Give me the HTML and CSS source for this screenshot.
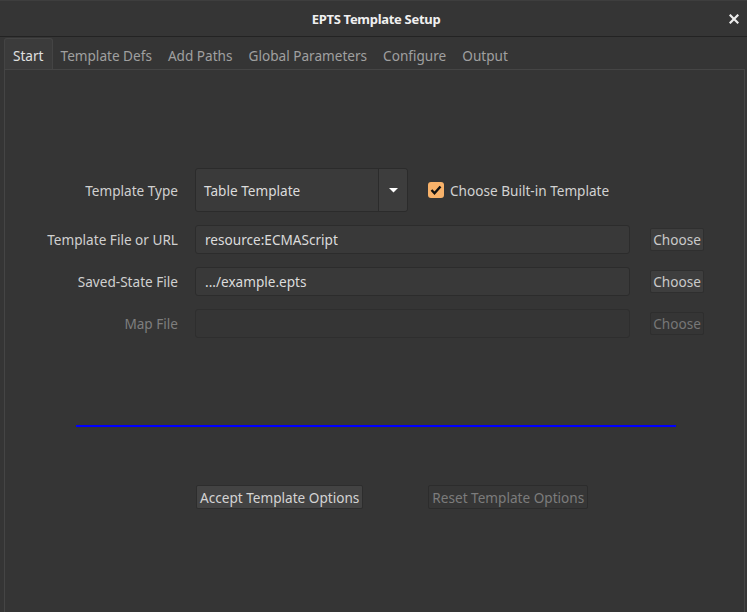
FILE: index.html
```html
<!DOCTYPE html>
<html>
<head>
<meta charset="utf-8">
<link rel="stylesheet" href="styles.css">
</head>
<body>
<div class="window">
  <div class="titlebar">
    <span class="title">EPTS Template Setup</span>
    <span class="close"><svg width="10" height="10" viewBox="0 0 10 10"><path d="M1.5 1.5 L8.5 8.5 M8.5 1.5 L1.5 8.5" stroke="#ececec" stroke-width="2.2" stroke-linecap="square"/></svg></span>
  </div>
  <div class="tabbar">
    <div class="tab active">Start</div>
    <div class="tab">Template Defs</div>
    <div class="tab">Add Paths</div>
    <div class="tab">Global Parameters</div>
    <div class="tab">Configure</div>
    <div class="tab">Output</div>
  </div>
  <div class="pane">
    <div class="form">
      <div class="label">Template Type</div>
      <div class="combo-row">
        <div class="combo">
          <span class="combo-text">Table Template</span>
          <span class="combo-btn"><svg width="9" height="5" viewBox="0 0 9 5"><path d="M0 0 H9 L4.5 4.5 Z" fill="#ffffff"/></svg></span>
        </div>
        <div class="check">
          <span class="box"><svg width="14" height="14" viewBox="0 0 14 14"><path d="M2.5 7 L5.5 10.2 L11.5 3.5" fill="none" stroke="#111" stroke-width="2.4"/></svg></span>
          <span class="check-text">Choose Built-in Template</span>
        </div>
      </div>
      <div class="spacer"></div>

      <div class="label">Template File or URL</div>
      <div class="field">resource:ECMAScript</div>
      <div class="btn-cell"><span class="small-btn">Choose</span></div>

      <div class="label">Saved-State File</div>
      <div class="field">.../example.epts</div>
      <div class="btn-cell"><span class="small-btn">Choose</span></div>

      <div class="label disabled">Map File</div>
      <div class="field disabled-field"></div>
      <div class="btn-cell"><span class="small-btn disabled-btn">Choose</span></div>
    </div>
    <div class="rule"></div>
    <div class="actions">
      <span class="action-btn">Accept Template Options</span>
      <span class="action-btn disabled-action">Reset Template Options</span>
    </div>
  </div>
</div>
</body>
</html>
```

FILE: styles.css
```css
html, body {
  margin: 0;
  padding: 0;
  background: #353535;
}
body {
  width: 747px;
  height: 612px;
  overflow: hidden;
  font-family: "Noto Sans", "Open Sans", sans-serif;
  font-size: 13.6px;
  color: #d8d8d8;
}
.window {
  display: flex;
  flex-direction: column;
  height: 612px;
}
.titlebar {
  height: 37px;
  border-bottom: 1px solid #232323;
  border-top: 1px solid #3e3e3e;
  box-sizing: border-box;
  position: relative;
  display: flex;
  align-items: center;
  justify-content: center;
  background: #353535;
}
.title {
  font-weight: bold;
  font-size: 13px;
  color: #f0f0f0;
  padding-left: 5px;
  letter-spacing: -0.3px;
}
.close {
  position: absolute;
  right: 8px;
  top: 13px;
  width: 10px;
  height: 10px;
  display: flex;
}
.tabbar {
  display: flex;
  padding: 1px 0 0 4px;
  height: 32px;
  box-sizing: border-box;
  align-items: stretch;
}
.tab {
  padding: 4px 8px 0 8px;
  display: flex;
  align-items: center;
  color: #a0a0a0;
}
.tab.active {
  color: #e0e0e0;
  background: #3b3b3b;
  border: 1px solid #444;
  border-bottom: none;
  border-radius: 3px 3px 0 0;
  padding: 3px 8px 0 8px;
}
.pane {
  flex: 1;
  margin-left: 4px;
  margin-right: 2px;
  border: 1px solid #454545;
  border-bottom: none;
  background: #353535;
  padding-top: 98px;
}
.form {
  display: grid;
  grid-template-columns: 155px 455px 54px;
  row-gap: 13px;
  margin-left: 35px;
}
.form > .label { padding-right: 17px; }
.form > .field { margin-right: 20px; }
.label {
  display: flex;
  align-items: center;
  justify-content: flex-end;
  color: #d0d0d0;
  white-space: nowrap;
}
.label.disabled { color: #7e7e7e; }
.combo-row {
  display: flex;
  align-items: center;
  gap: 20px;
  height: 44px;
}
.combo {
  width: 213px;
  height: 44px;
  box-sizing: border-box;
  border: 1px solid #2b2b2b;
  border-radius: 3px;
  background: #3a3a3a;
  display: flex;
}
.combo-text {
  flex: 1;
  display: flex;
  align-items: center;
  padding-left: 8px;
  color: #dcdcdc;
}
.combo-btn {
  width: 28px;
  border-left: 1px solid #2b2b2b;
  background: #3d3d3d;
  display: flex;
  align-items: center;
  justify-content: center;
  border-radius: 0 3px 3px 0;
}
.check {
  display: flex;
  align-items: center;
  gap: 6px;
}
.box {
  width: 16px;
  height: 16px;
  border-radius: 3px;
  background: #f8b26a;
  display: flex;
  align-items: center;
  justify-content: center;
}
.check-text { color: #d2d2d2; }
.field {
  height: 29px;
  box-sizing: border-box;
  border: 1px solid #2c2c2c;
  border-radius: 3px;
  background: #393939;
  display: flex;
  align-items: center;
  padding-left: 9px;
  color: #dcdcdc;
}
.field.disabled-field {
  background: #353535;
  border-color: #2e2e2e;
}
.btn-cell {
  display: flex;
  align-items: center;
}
.small-btn {
  width: 54px;
  height: 23px;
  box-sizing: border-box;
  border: 1px solid #2f2f2f;
  border-radius: 2px;
  background: #3e3e3e;
  display: flex;
  align-items: center;
  justify-content: center;
  color: #cacaca;
}
.small-btn.disabled-btn {
  background: #353535;
  color: #777;
  border-color: #2e2e2e;
}
.rule {
  height: 2px;
  width: 600px;
  background: #0000ff;
  margin: 87px 0 0 71px;
}
.actions {
  display: flex;
  gap: 65px;
  margin: 58px 0 0 191px;
}
.action-btn {
  height: 24px;
  box-sizing: border-box;
  padding: 0 3px;
  border: 1px solid #2d2d2d;
  border-radius: 2px;
  background: #434343;
  display: flex;
  align-items: center;
  color: #d4d4d4;
}
.action-btn.disabled-action {
  background: #363636;
  color: #7c7c7c;
  border-color: #2c2c2c;
}
```
